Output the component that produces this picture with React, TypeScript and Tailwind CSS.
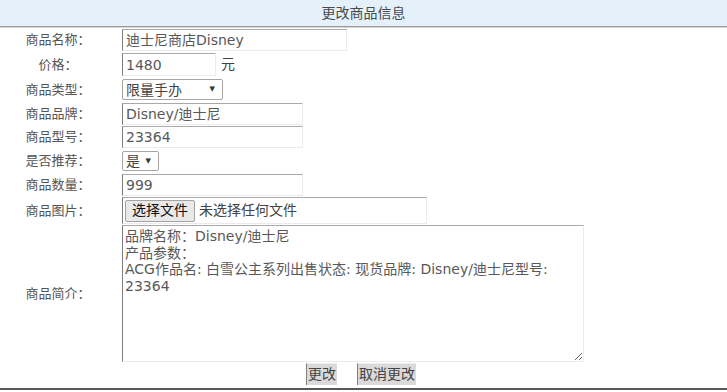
import React from "react";

const font = "font-['DejaVu_Sans','Noto_Sans_CJK_SC',sans-serif]";

function Label({ children }: { children: React.ReactNode }) {
  return (
    <div className="w-[116px] shrink-0 text-center text-[13px] leading-[16px] text-[#555]">
      {children}
    </div>
  );
}

function Field({ w, children }: { w: string; children: React.ReactNode }) {
  return (
    <div
      className={
        "h-full flex items-center pl-[3px] text-[14px] leading-[18px] text-[#585858] whitespace-nowrap overflow-hidden border-t border-l border-r border-b border-t-[#a9a9a9] border-l-[#7d7d7d] border-r-[#ebebeb] border-b-[#ebebeb] bg-white " +
        w
      }
    >
      {children}
    </div>
  );
}

function Select({ w, text }: { w: string; text: string }) {
  return (
    <div
      className={
        "h-full flex items-center justify-between pl-[3px] pr-[7px] text-[14px] leading-[18px] text-[#444] border border-[#a6a6a6] rounded-[2px] bg-white " +
        w
      }
    >
      <span>{text}</span>
      <span className="text-[7px] leading-[7px] text-[#333]">▼</span>
    </div>
  );
}

export default function App() {
  const desc =
    "品牌名称：Disney/迪士尼\n产品参数：\nACG作品名: 白雪公主系列出售状态: 现货品牌: Disney/迪士尼型号:\n23364";
  return (
    <div className={"w-[727px] h-[392px] bg-white overflow-hidden flex flex-col " + font}>
      <div className="h-[27px] shrink-0 bg-[#e4f1fa] border-b border-[#9c9c9c] shadow-[0_1px_0_#d6d6d6] flex items-center justify-center text-[14px] text-[#4a4a4a]">
        更改商品信息
      </div>

      <div className="flex items-center h-[22px] mt-[2px]">
        <Label>商品名称：</Label>
        <div className="ml-[6px] h-full flex">
          <Field w="w-[225px]">迪士尼商店Disney</Field>
        </div>
      </div>

      <div className="flex items-center h-[23px] mt-[2px]">
        <Label>价格：</Label>
        <div className="ml-[6px] h-full flex items-center">
          <Field w="w-[94px]">1480</Field>
          <span className="ml-[5px] text-[14px] text-[#444]">元</span>
        </div>
      </div>

      <div className="flex items-center h-[21px] mt-[3px]">
        <Label>商品类型：</Label>
        <div className="ml-[6px] h-full flex">
          <Select w="w-[101px]" text="限量手办" />
        </div>
      </div>

      <div className="flex items-center h-[22px] mt-[3px]">
        <Label>商品品牌：</Label>
        <div className="ml-[6px] h-full flex">
          <Field w="w-[181px]">Disney/迪士尼</Field>
        </div>
      </div>

      <div className="flex items-center h-[22px] mt-[1px]">
        <Label>商品型号：</Label>
        <div className="ml-[6px] h-full flex">
          <Field w="w-[181px]">23364</Field>
        </div>
      </div>

      <div className="flex items-center h-[20px] mt-[3px]">
        <Label>是否推荐：</Label>
        <div className="ml-[6px] h-full flex">
          <Select w="w-[37px]" text="是" />
        </div>
      </div>

      <div className="flex items-center h-[22px] mt-[3px]">
        <Label>商品数量：</Label>
        <div className="ml-[6px] h-full flex">
          <Field w="w-[181px]">999</Field>
        </div>
      </div>

      <div className="flex items-center h-[27px] mt-[1px]">
        <Label>商品图片：</Label>
        <div className="ml-[6px] h-full flex items-center w-[305px] border-t border-l border-r border-b border-t-[#a9a9a9] border-l-[#7d7d7d] border-r-[#ebebeb] border-b-[#ebebeb] pl-[2px]">
          <div className="h-[22px] px-[6px] flex items-center text-[14px] text-[#111] bg-[#e9e9e9] border border-[#a3a3a3] rounded-[2px]">
            选择文件
          </div>
          <span className="ml-[4px] text-[14px] text-[#444]">未选择任何文件</span>
        </div>
      </div>

      <div className="flex items-center h-[137px] mt-[1px]">
        <Label>商品简介：</Label>
        <div className="ml-[6px] h-full flex">
          <textarea
            readOnly
            value={desc}
            className={
              "w-[462px] h-[137px] resize px-[2px] py-[2px] text-[14px] leading-[16.5px] text-[#585858] bg-white outline-none border-t border-l border-r border-b border-t-[#a9a9a9] border-l-[#7d7d7d] border-r-[#ebebeb] border-b-[#ebebeb] whitespace-pre-wrap " +
              font
            }
          />
        </div>
      </div>

      <div className="flex justify-center items-center h-[22px] mt-[1px] gap-[20px] pr-[5px]">
        <div className="h-full px-[1px] flex items-center text-[14px] text-[#444] bg-[#dadada] border-l border-l-[#7f7f7f] border-t border-t-[#ececec]">
          更改
        </div>
        <div className="h-full px-[1px] flex items-center text-[14px] text-[#444] bg-[#dadada] border-l border-l-[#7f7f7f] border-t border-t-[#ececec]">
          取消更改
        </div>
      </div>

      <div className="h-[2px] mt-[3px] bg-[#585858] shrink-0" />
    </div>
  );
}
